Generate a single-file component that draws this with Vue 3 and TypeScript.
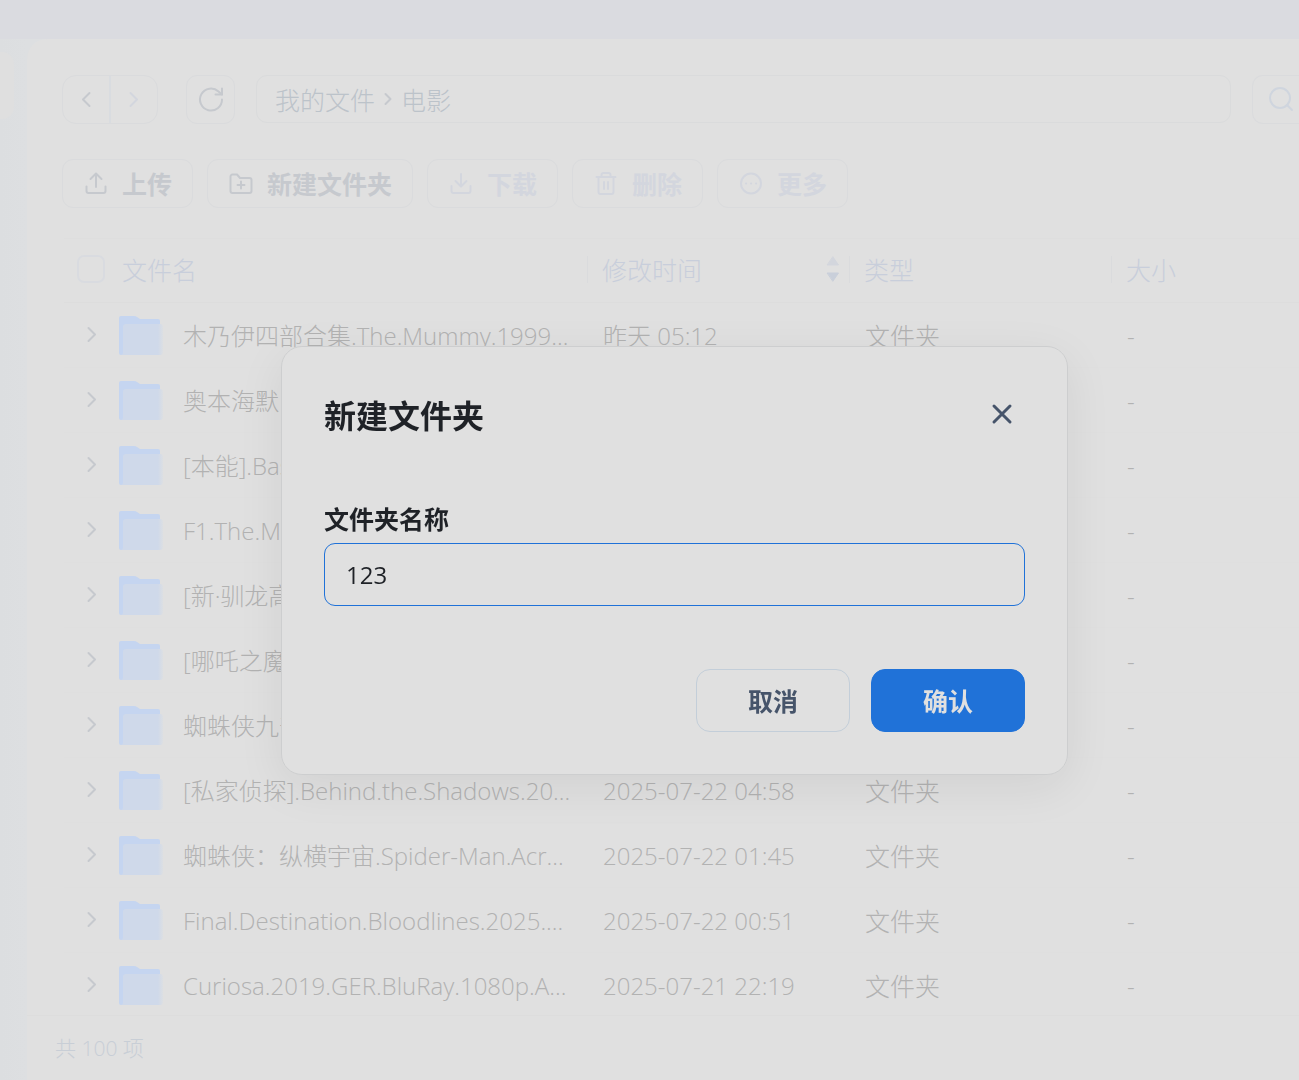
<script setup lang="ts">
import { ref } from 'vue'

interface FileRow {
  name: string
  time: string
  type: string
  size: string
}

interface Action {
  key: string
  label: string
  disabled: boolean
}

const actions: Action[] = [
  { key: 'upload', label: '上传', disabled: false },
  { key: 'folder', label: '新建文件夹', disabled: false },
  { key: 'download', label: '下载', disabled: true },
  { key: 'delete', label: '删除', disabled: true },
  { key: 'more', label: '更多', disabled: true },
]

const folder = (name: string, time = '', type = ''): FileRow => ({ name, time, type, size: '-' })

const rows: FileRow[] = [
  folder('木乃伊四部合集.The.Mummy.1999…', '昨天 05:12', '文件夹'),
  folder('奥本海默'),
  folder('[本能].Bas'),
  folder('F1.The.Mo'),
  folder('[新·驯龙高'),
  folder('[哪吒之魔'),
  folder('蜘蛛侠九部'),
  folder('[私家侦探].Behind.the.Shadows.20…', '2025-07-22 04:58', '文件夹'),
  folder('蜘蛛侠：纵横宇宙.Spider-Man.Acr…', '2025-07-22 01:45', '文件夹'),
  folder('Final.Destination.Bloodlines.2025.…', '2025-07-22 00:51', '文件夹'),
  folder('Curiosa.2019.GER.BluRay.1080p.A…', '2025-07-21 22:19', '文件夹'),
]

const folderName = ref('123')
const allChecked = ref(false)
</script>

<template>
  <div class="app">
    <header class="topbar"></header>
    <div class="body">
      <aside class="sidebar"><div class="side-card"></div></aside>
      <main class="panel">
        <div class="navrow">
          <div class="nav-group">
            <button type="button" aria-label="后退">
              <svg width="24" height="24" viewBox="0 0 24 24"><path d="M15.500 5 9 11.500l6.500 6.500" /></svg>
            </button>
            <button type="button" class="off" aria-label="前进">
              <svg width="24" height="24" viewBox="0 0 24 24"><path d="M8.500 5 15 11.500 8.500 18" /></svg>
            </button>
          </div>
          <button type="button" class="refresh" aria-label="刷新">
            <svg width="28" height="28" viewBox="0 0 28 28">
              <path d="M25 13.500A11 11 0 1 1 21.500 5.500L25 8.500" />
              <path d="M25 2.500v6h-6.500" />
            </svg>
          </button>
          <nav class="path">
            <a href="#">我的文件</a>
            <svg width="24" height="24" viewBox="0 0 24 24"><path d="M9.500 7 14.500 12l-5 5" /></svg>
            <a href="#">电影</a>
          </nav>
          <button type="button" class="search" aria-label="搜索">
            <svg width="26" height="26" viewBox="0 0 26 26">
              <circle cx="12" cy="11" r="10" />
              <path d="m19 18 5 5" />
            </svg>
          </button>
        </div>

        <div class="actions">
          <button v-for="a in actions" :key="a.key" type="button" :disabled="a.disabled">
            <svg width="24" height="24" viewBox="0 0 24 24">
              <template v-if="a.key === 'upload'">
                <path d="M12 15V2M6.500 7 12 1.500 17.500 7M2.500 14.500v4.500a2 2 0 0 0 2 2h15a2 2 0 0 0 2-2v-4.500" />
              </template>
              <template v-else-if="a.key === 'folder'">
                <path d="M1.500 19V4.500a2 2 0 0 1 2-2H8l3 3.500h9.500a2 2 0 0 1 2 2V19a2 2 0 0 1-2 2h-17a2 2 0 0 1-2-2zM12 9.500v7M8.500 13h7" />
              </template>
              <template v-else-if="a.key === 'download'">
                <path d="M12 2v12M6.500 9 12 14.500 17.500 9M2.500 14v5a2 2 0 0 0 2 2h15a2 2 0 0 0 2-2v-5" />
              </template>
              <template v-else-if="a.key === 'delete'">
                <path d="M2.500 5h19M7.500 4.500V3a2 2 0 0 1 2-2h5a2 2 0 0 1 2 2v1.500M4.500 5.500v14.500a2 2 0 0 0 2 2h11a2 2 0 0 0 2-2V5.500M10 10v7M14 10v7" />
              </template>
              <template v-else>
                <circle cx="12" cy="11.500" r="10" />
                <path d="M7 11.500h.1M12 11.500h.1M17 11.500h.1" />
              </template>
            </svg>
            <span>{{ a.label }}</span>
          </button>
        </div>

        <div class="list">
          <table>
            <colgroup>
              <col class="c-name" />
              <col class="c-time" />
              <col class="c-type" />
              <col />
            </colgroup>
            <thead>
              <tr>
                <th scope="col">
                  <div class="head-name">
                    <input v-model="allChecked" type="checkbox" aria-label="全选" />
                    <span>文件名</span>
                  </div>
                </th>
                <th scope="col">
                  <div class="head-sort">
                    <span>修改时间</span>
                    <svg width="14" height="28" viewBox="0 0 14 28">
                      <path class="up" d="M7 2 12.500 10h-11z" />
                      <path class="down" d="M7 26 12.500 18h-11z" />
                    </svg>
                  </div>
                </th>
                <th scope="col"><div><span>类型</span></div></th>
                <th scope="col"><div><span>大小</span></div></th>
              </tr>
            </thead>
            <tbody>
              <tr v-for="r in rows" :key="r.name">
                <td>
                  <div class="cell-name">
                    <svg class="chev" width="20" height="20" viewBox="0 0 20 20"><path d="m6.500 3 6.500 6.500L6.500 16" /></svg>
                    <svg class="folder" width="44" height="42" viewBox="0 0 44 42">
                      <defs>
                        <linearGradient id="folder-front" x1="0" x2="1" y1="0" y2="0">
                          <stop offset="0" stop-color="#cfd9ea" />
                          <stop offset="0.88" stop-color="#cfd9ea" />
                          <stop offset="1" stop-color="#dcdfe3" />
                        </linearGradient>
                      </defs>
                      <path d="M0 4a2 2 0 0 1 2-2h13q2 0 3 1l3 2h18a2 2 0 0 1 2 2v30a4 4 0 0 1-4 4H2a2 2 0 0 1-2-2z" fill="#c5d5f0" />
                      <path d="M4 13a3 3 0 0 1 3-3h34a3 3 0 0 1 3 3v25a3 3 0 0 1-3 3H2q2 0 2-3z" fill="url(#folder-front)" />
                    </svg>
                    <span>{{ r.name }}</span>
                  </div>
                </td>
                <td>{{ r.time }}</td>
                <td class="cjk">{{ r.type }}</td>
                <td>{{ r.size }}</td>
              </tr>
            </tbody>
          </table>
        </div>
        <footer class="footer">共 100 项</footer>
      </main>
    </div>

    <div class="overlay">
      <form class="dialog" role="dialog" aria-labelledby="dialog-title" @submit.prevent>
        <div class="dialog-head">
          <h2 id="dialog-title">新建文件夹</h2>
          <button type="button" class="close" aria-label="关闭">
            <svg width="24" height="24" viewBox="0 0 24 24"><path d="m4 4 16 16M20 4 4 20" /></svg>
          </button>
        </div>
        <label for="folder-name">文件夹名称</label>
        <input id="folder-name" v-model="folderName" type="text" autocomplete="off" />
        <div class="dialog-foot">
          <button type="button" class="cancel">取消</button>
          <button type="submit" class="confirm">确认</button>
        </div>
      </form>
    </div>
  </div>
</template>

<style>
body {
  margin: 0;
  background: #e0e0e0;
}
</style>

<style scoped>
* {
  box-sizing: border-box;
}
.app {
  display: flex;
  flex-direction: column;
  height: 100vh;
  overflow: hidden;
  background: #dcdee0;
  font-family: 'Open Sans', 'Noto Sans CJK SC', sans-serif;
  font-size: 24px;
  font-weight: 300;
  color: #b2b2b2;
}
button,
input {
  font: inherit;
  color: inherit;
  background: none;
  margin: 0;
  padding: 0;
}
svg {
  display: block;
  flex: none;
  fill: none;
  stroke: currentColor;
  stroke-width: 2;
  stroke-linecap: round;
  stroke-linejoin: round;
}
.topbar {
  flex: none;
  height: 39px;
  background: #dadbe0;
}
.body {
  flex: 1;
  display: flex;
  min-height: 0;
  background: #dddfe1;
}
.sidebar {
  flex: none;
  width: 27px;
  padding-top: 13px;
  background: linear-gradient(90deg, #dcdee0, #dddfe1);
}
.side-card {
  width: 14px;
  height: 67px;
  border-radius: 0 12px 12px 0;
  background: #dfdfdf;
}
.panel {
  flex: 1;
  display: flex;
  flex-direction: column;
  min-width: 0;
  background: #e0e0e0;
  border-top-left-radius: 20px;
}
.navrow {
  display: flex;
  align-items: flex-start;
  padding: 36px 0 0 35px;
  color: #c6c9ce;
}
.nav-group {
  display: flex;
  width: 96px;
  height: 49px;
  border: 1px solid #dadbdd;
  border-radius: 14px;
}
.nav-group button {
  flex: 1;
  display: grid;
  place-items: center;
  border: 0;
}
.nav-group .off {
  color: #d3d6de;
  border-left: 2px solid #d9dce0;
}
.refresh {
  display: grid;
  place-items: center;
  width: 49px;
  height: 49px;
  margin: 0 21px 0 28px;
  border: 1px solid #dadbdd;
  border-radius: 11px;
}
.path {
  flex: 1;
  display: flex;
  align-items: center;
  height: 48px;
  padding-left: 18px;
  border: 1px solid #dadbdc;
  border-radius: 11px;
  font-size: 25px;
}
.path a {
  color: #bcc3ca;
  text-decoration: none;
}
.path svg {
  margin: 0 1px;
}
.search {
  display: grid;
  align-items: center;
  width: 47px;
  height: 49px;
  margin-left: 21px;
  padding-left: 15px;
  border: 1px solid #dadbdd;
  border-right: 0;
  border-radius: 11px 0 0 11px;
  color: #cfd5de;
}
.actions {
  display: flex;
  gap: 14px;
  padding: 35px 0 0 35px;
}
.actions button {
  display: flex;
  align-items: center;
  gap: 14px;
  height: 49px;
  padding: 0 20px 0 21px;
  border: 1px solid #dadbdd;
  border-radius: 11px;
  color: #c6c9ce;
  font-size: 25px;
  font-weight: 700;
  line-height: 32px;
}
.actions button:disabled {
  color: #d3d6de;
}
.list {
  flex: 1;
  min-height: 0;
  margin: 30px 0 0 37px;
  overflow: hidden;
}
table {
  width: 100%;
  table-layout: fixed;
  border-collapse: separate;
  border-spacing: 0;
}
.c-name {
  width: 524px;
}
.c-time,
.c-type {
  width: 262px;
}
th {
  height: 65px;
  padding: 0 0 3px;
  border-top: 1px solid #dedede;
  border-bottom: 1px solid #dddddd;
  color: #c8cedb;
  font-size: 25px;
  font-weight: 300;
  line-height: 28px;
  text-align: left;
}
th > div {
  display: flex;
  align-items: center;
  height: 27px;
  padding-left: 14px;
  border-right: 1px solid #dadbdd;
}
th span {
  padding-top: 2px;
}
th:last-child > div {
  border-right: 0;
}
th > .head-name {
  gap: 17px;
  padding-left: 13px;
}
.head-name input {
  appearance: none;
  width: 28px;
  height: 28px;
  border: 2px solid #d9dbe0;
  border-radius: 7px;
}
.head-sort {
  justify-content: space-between;
  padding-right: 9px;
}
.up,
.down {
  stroke-width: 1;
  fill: #d3d6dd;
  stroke: #d3d6dd;
}
.down {
  fill: #c9cfda;
  stroke: #c9cfda;
}
td {
  height: 65px;
  padding: 2px 0 0 15px;
  border-bottom: 1px solid #dfdfdf;
  line-height: 32px;
  white-space: nowrap;
}
td.cjk {
  font-size: 25px;
}
td:first-child {
  padding: 0 0 0 18px;
}
.cell-name {
  display: flex;
  align-items: center;
}
.cell-name span {
  padding-top: 2px;
}
.chev {
  color: #c6c9ce;
}
.folder {
  margin: 0 20px 0 17px;
  stroke: none;
}
.footer {
  flex: none;
  height: 65px;
  padding-left: 28px;
  border-top: 1px solid #dddddd;
  color: #c8ced6;
  font-size: 21px;
  line-height: 64px;
}
.overlay {
  position: fixed;
  inset: 0;
  display: flex;
  align-items: center;
  justify-content: center;
  padding: 41px 0 0 50px;
}
.dialog {
  display: flex;
  flex-direction: column;
  width: 787px;
  padding: 41px 42px 42px;
  border: 1px solid #cdcecf;
  border-radius: 21px;
  background: #e0e0e0;
  box-shadow: 0 12px 48px rgba(0, 0, 0, 0.07);
  color: #1f2227;
}
.dialog-head {
  display: flex;
  align-items: flex-start;
  justify-content: space-between;
  height: 56px;
}
h2 {
  margin: 0;
  font-size: 32px;
  font-weight: 700;
  line-height: 56px;
}
.close {
  display: grid;
  place-items: center;
  width: 46px;
  height: 52px;
  border: 0;
  color: #46546a;
}
.close svg {
  stroke-width: 3;
}
label {
  margin-top: 57px;
  font-size: 25px;
  font-weight: 700;
  line-height: 36px;
}
.dialog input {
  height: 63px;
  margin-top: 6px;
  padding: 0 21px;
  border: 1px solid #2072d8;
  border-radius: 11px;
  outline: 0;
  font-weight: 400;
}
.dialog-foot {
  display: flex;
  justify-content: flex-end;
  gap: 21px;
  margin-top: 63px;
}
.dialog-foot button {
  width: 154px;
  height: 63px;
  border: 1px solid #c3ced9;
  border-radius: 14px;
  color: #46546a;
  font-size: 25px;
  font-weight: 700;
  line-height: 32px;
}
.dialog-foot .confirm {
  border-color: #2072d8;
  background: #2072d8;
  color: #e0e0e0;
}
</style>
